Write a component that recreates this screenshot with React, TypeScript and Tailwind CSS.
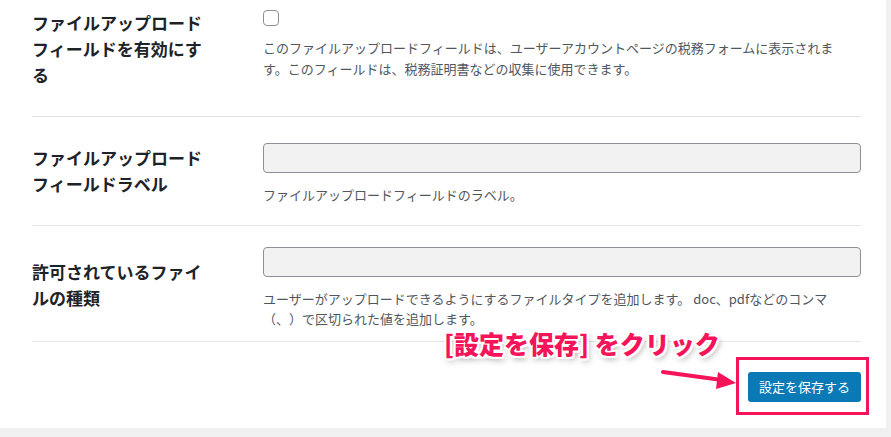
import React from "react";

const font = { fontFamily: '"Noto Sans CJK JP", "Noto Sans", sans-serif' };

export default function App() {
  return (
    <div className="w-[891px] h-[437px] bg-[#f0f0f1] overflow-hidden" style={font}>
      <div className="relative w-[886px] h-[428px] bg-white pl-[32px] pr-[25px]">
        {/* Row 1 */}
        <div className="flex h-[116px]">
          <div className="w-[231px] pt-[10px]">
            <div className="text-[17px] leading-[26px] font-bold text-[#1d2327]">
              ファイルアップロード
              <br />
              フィールドを有効にす
              <br />る
            </div>
          </div>
          <div className="flex-1 pt-[10px]">
            <div className="w-[16px] h-[16px] border border-[#8c8f94] rounded-[4px] bg-white" />
            <p className="mt-[11px] text-[13px] leading-[21px] text-[#50575e] whitespace-nowrap">
              このファイルアップロードフィールドは、ユーザーアカウントページの税務フォームに表示されま
              <br />
              す。このフィールドは、税務証明書などの収集に使用できます。
            </p>
          </div>
        </div>
        {/* Row 2 */}
        <div className="flex h-[109px] border-t border-[#e4e4e6]">
          <div className="w-[231px] pt-[28px]">
            <div className="text-[17px] leading-[26px] font-bold text-[#1d2327]">
              ファイルアップロード
              <br />
              フィールドラベル
            </div>
          </div>
          <div className="flex-1 pt-[26px]">
            <div className="h-[30px] border border-[#8c8f94] rounded-[4px] bg-[#f2f2f2]" />
            <p className="mt-[11px] text-[13px] leading-[21px] text-[#50575e] whitespace-nowrap">
              ファイルアップロードフィールドのラベル。
            </p>
          </div>
        </div>
        {/* Row 3 */}
        <div className="flex h-[117px] border-t border-b border-[#e4e4e6]">
          <div className="w-[231px] pt-[33px]">
            <div className="text-[17px] leading-[26px] font-bold text-[#1d2327]">
              許可されているファイ
              <br />
              ルの種類
            </div>
          </div>
          <div className="flex-1 pt-[21px]">
            <div className="h-[30px] border border-[#8c8f94] rounded-[4px] bg-[#f2f2f2]" />
            <p className="mt-[12px] text-[13px] leading-[20px] text-[#50575e] whitespace-nowrap [text-spacing-trim:space-all]">
              ユーザーがアップロードできるようにするファイルタイプを追加します。 doc、pdfなどのコンマ
              <br />
              （、）で区切られた値を追加します。
            </p>
          </div>
        </div>
        {/* Bottom */}
        <div className="flex justify-end pt-[30px]">
          <div className="relative">
            <button className="h-[30px] w-[113px] rounded-[3px] bg-[#0a7ab7] text-white text-[13px] leading-[30px]">
              設定を保存する
            </button>
            <div className="absolute left-[-12px] top-[-15px] right-[-8px] bottom-[-13px] border-[3px] border-[#f5145a] shadow-[0_0_2px_1px_rgba(255,255,255,0.9)]" />
          </div>
        </div>

        {/* Callout */}
        <div
          className="absolute left-[444px] top-[326px] text-[25px] leading-[34px] font-black text-[#f5145a] whitespace-nowrap [text-shadow:2px_0_0_#fff,-2px_0_0_#fff,0_2px_0_#fff,0_-2px_0_#fff,2px_2px_0_#fff,-2px_-2px_0_#fff,2px_-2px_0_#fff,-2px_2px_0_#fff,2px_3px_6px_rgba(0,0,0,0.4)]"
        >
          [設定を保存] をクリック
        </div>
        <svg className="absolute left-[660px] top-[364px]" width="80" height="26" viewBox="0 0 80 26">
          <line x1="3" y1="8" x2="62" y2="16" stroke="#f5145a" strokeWidth="4" strokeLinecap="round" />
          <polygon points="58,8 76,19 56,25" fill="#f5145a" />
        </svg>
      </div>
    </div>
  );
}
